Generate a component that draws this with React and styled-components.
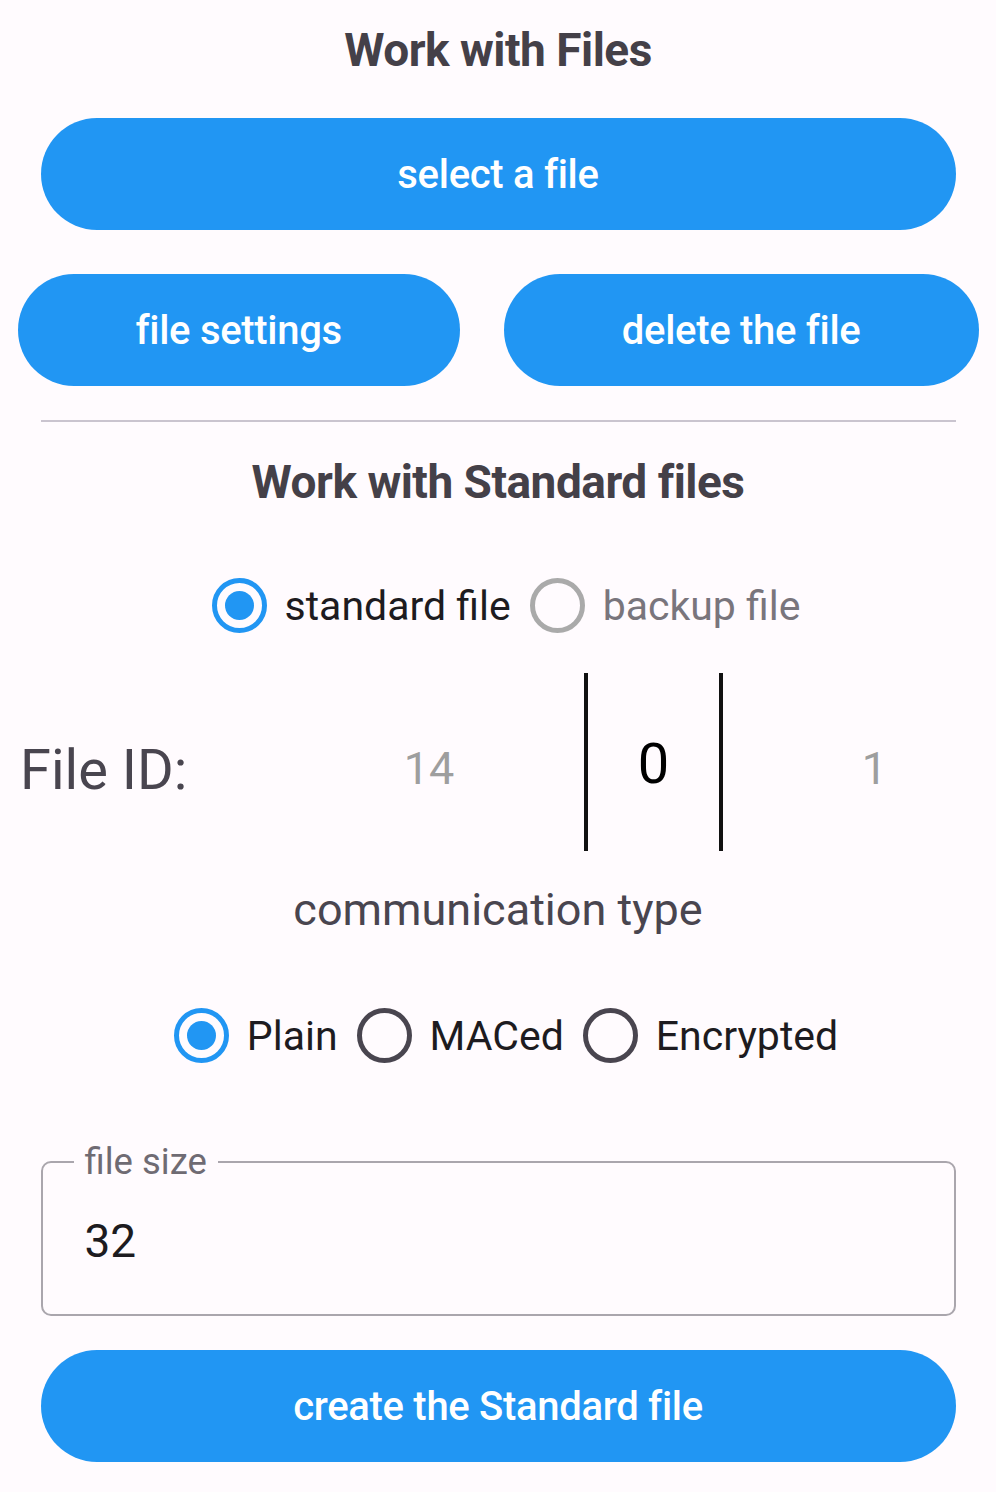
import React, { useState } from 'react';
import styled, { createGlobalStyle } from 'styled-components';

const GlobalStyle = createGlobalStyle`
  html, body {
    margin: 0;
    padding: 0;
    background: #fffbfe;
    font-family: Roboto, "Noto Sans", "Liberation Sans", sans-serif;
  }
`;

const Page = styled.div`
  width: 996px;
  min-height: 1492px;
  background: #fffbfe;
  display: flex;
  flex-direction: column;
  align-items: center;
  box-sizing: border-box;
  padding-top: 24px;
`;

const Title = styled.h2`
  margin: 0;
  font-size: 46px;
  font-weight: 700;
  color: #444048;
  letter-spacing: -0.5px;
  line-height: 52px;
  margin-bottom: ${(p) => p.$gap || 0}px;
`;

const PillButton = styled.button`
  border: none;
  background: #2196f3;
  color: #ffffff;
  font-family: Roboto, "Noto Sans", sans-serif;
  font-weight: 500;
  font-size: 40px;
  height: 112px;
  border-radius: 56px;
  cursor: pointer;
  width: ${(p) => (p.$wide ? '915px' : 'auto')};
  padding: ${(p) => (p.$wide ? '0' : '0 118px')};
  letter-spacing: -0.3px;
`;

const ButtonRow = styled.div`
  display: flex;
  gap: 44px;
  justify-content: center;
  margin-top: 44px;
  width: 100%;
`;

const Divider = styled.hr`
  width: 915px;
  border: none;
  border-top: 2px solid #cac4cf;
  margin: 34px 0 34px;
`;

const RadioGroup = styled.div`
  display: flex;
  align-items: center;
  gap: 19px;
  margin-top: ${(p) => p.$top || 0}px;
  padding-left: 16px;
`;

const RadioItem = styled.label`
  display: flex;
  align-items: center;
  gap: 18px;
  font-size: 41px;
  color: ${(p) => (p.$muted ? '#79757c' : '#1d1b20')};
  cursor: pointer;
`;

const RadioCircle = styled.span`
  width: 55px;
  height: 55px;
  box-sizing: border-box;
  border-radius: 50%;
  border: 5px solid ${(p) => (p.$checked ? '#2196f3' : p.$color || '#49454f')};
  display: flex;
  align-items: center;
  justify-content: center;
  &::after {
    content: '';
    width: 29px;
    height: 29px;
    border-radius: 50%;
    background: #2196f3;
    display: ${(p) => (p.$checked ? 'block' : 'none')};
  }
`;

const FileIdRow = styled.div`
  display: flex;
  align-items: center;
  width: 100%;
  height: 178px;
  margin-top: 40px;
`;

const FileIdLabel = styled.div`
  width: 254px;
  padding-left: 20px;
  padding-top: 16px;
  font-size: 56px;
  color: #49454f;
`;

const SideNumber = styled.div`
  width: ${(p) => p.$w}px;
  padding-left: ${(p) => p.$pl || 0}px;
  padding-top: 12px;
  box-sizing: border-box;
  text-align: center;
  font-size: 45px;
  color: #9e9e9e;
`;

const CenterNumber = styled.div`
  width: 139px;
  height: 178px;
  box-sizing: border-box;
  border-left: 4px solid #111;
  border-right: 4px solid #111;
  display: flex;
  align-items: center;
  justify-content: center;
  font-size: 56px;
  color: #000;
  padding-top: 4px;
`;

const Caption = styled.div`
  margin-top: 32px;
  font-size: 45px;
  color: #49454f;
`;

const Field = styled.fieldset`
  width: 915px;
  box-sizing: border-box;
  margin: 81px 0 0;
  border: 2.5px solid #aaa6ad;
  border-radius: 10px;
  padding: 0 42px;
`;

const Legend = styled.legend`
  font-size: 36.5px;
  line-height: 36px;
  color: #6f6b73;
  padding: 0 11px;
  margin-left: -11px;
`;

const FieldValue = styled.div`
  height: 134px;
  box-sizing: border-box;
  padding-top: 36px;
  line-height: 50px;
  font-size: 46px;
  color: #1d1b20;
`;

const BottomButton = styled(PillButton)`
  margin-top: 34px;
`;

const Radio = ({ label, checked, muted, ringColor, onClick }) => (
  <RadioItem $muted={muted} onClick={onClick}>
    <RadioCircle $checked={checked} $color={ringColor} />
    {label}
  </RadioItem>
);

const App = () => {
  const [fileType, setFileType] = useState('standard');
  const [comm, setComm] = useState('Plain');

  return (
    <>
      <GlobalStyle />
      <Page>
        <Title $gap={42}>Work with Files</Title>
        <PillButton $wide>select a file</PillButton>
        <ButtonRow>
          <PillButton>file settings</PillButton>
          <PillButton>delete the file</PillButton>
        </ButtonRow>
        <Divider />
        <Title>Work with Standard files</Title>

        <RadioGroup $top={70}>
          <Radio
            label="standard file"
            checked={fileType === 'standard'}
            onClick={() => setFileType('standard')}
          />
          <Radio
            label="backup file"
            muted
            ringColor="#aaaaaa"
            checked={fileType === 'backup'}
            onClick={() => setFileType('backup')}
          />
        </RadioGroup>

        <FileIdRow>
          <FileIdLabel>File ID:</FileIdLabel>
          <SideNumber $w={310}>14</SideNumber>
          <CenterNumber>0</CenterNumber>
          <SideNumber $w={273} $pl={30}>1</SideNumber>
        </FileIdRow>

        <Caption>communication type</Caption>

        <RadioGroup $top={72}>
          {['Plain', 'MACed', 'Encrypted'].map((c) => (
            <Radio key={c} label={c} checked={comm === c} onClick={() => setComm(c)} />
          ))}
        </RadioGroup>

        <Field>
          <Legend>file size</Legend>
          <FieldValue>32</FieldValue>
        </Field>

        <BottomButton $wide>create the Standard file</BottomButton>
      </Page>
    </>
  );
};

export default App;
